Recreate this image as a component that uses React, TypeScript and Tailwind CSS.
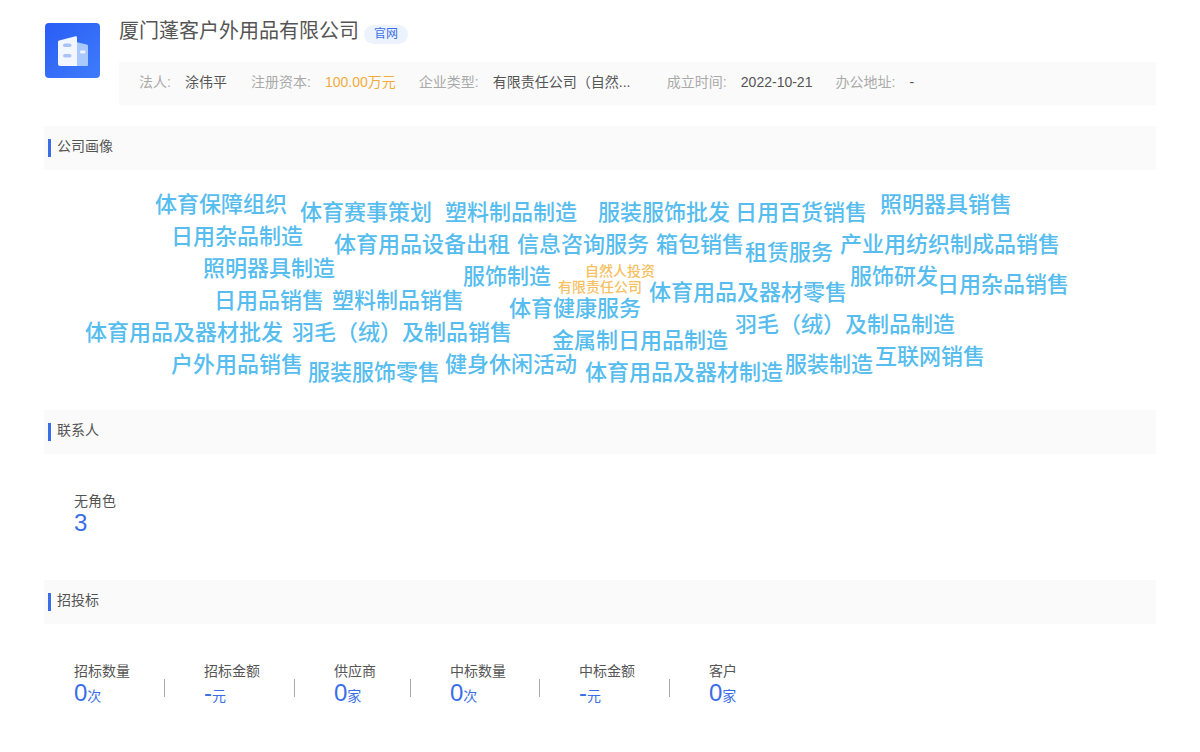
const F = '"Liberation Sans","Noto Sans CJK SC",sans-serif';

const words: [string, number, number, number?, string?][] = [
  ["体育保障组织", 155, 204],
  ["体育赛事策划", 300, 212],
  ["塑料制品制造", 445, 212],
  ["服装服饰批发", 598, 212],
  ["日用百货销售", 735, 212],
  ["照明器具销售", 880, 204],
  ["日用杂品制造", 171, 236],
  ["体育用品设备出租", 334, 244],
  ["信息咨询服务", 517, 244],
  ["箱包销售", 656, 244],
  ["租赁服务", 745, 252],
  ["产业用纺织制成品销售", 840, 244],
  ["照明器具制造", 203, 268],
  ["服饰制造", 463, 276],
  ["自然人投资", 585, 270, 14, "#f5c163"],
  ["有限责任公司", 558, 286, 14, "#f5c163"],
  ["体育用品及器材零售", 649, 292],
  ["服饰研发", 850, 276],
  ["日用杂品销售", 937, 284],
  ["日用品销售", 214, 300],
  ["塑料制品销售", 332, 300],
  ["体育健康服务", 509, 308],
  ["体育用品及器材批发", 85, 332],
  ["羽毛（绒）及制品销售", 292, 332],
  ["金属制日用品制造", 552, 340],
  ["羽毛（绒）及制品制造", 735, 324],
  ["户外用品销售", 171, 364],
  ["服装服饰零售", 308, 372],
  ["健身休闲活动", 445, 364],
  ["体育用品及器材制造", 585, 372],
  ["服装制造", 785, 364],
  ["互联网销售", 875, 356],
];

const info: [string, string, string?][] = [
  ["法人:", "涂伟平"],
  ["注册资本:", "100.00万元", "text-[#f2ac3a]"],
  ["企业类型:", "有限责任公司（自然..."],
  ["成立时间:", "2022-10-21"],
  ["办公地址:", "-"],
];

const bids: [string, string, string][] = [
  ["招标数量", "0", "次"],
  ["招标金额", "-", "元"],
  ["供应商", "0", "家"],
  ["中标数量", "0", "次"],
  ["中标金额", "-", "元"],
  ["客户", "0", "家"],
];

function Section({ title }: { title: string }) {
  return (
    <div className="h-11 bg-[#fafafa] flex items-start pl-1 pt-[12px]">
      <span className="w-[3px] h-[18px] bg-[#3a6ee8] mt-[1px]" />
      <span className="ml-1.5 text-sm leading-[16px] text-[#555]">{title}</span>
    </div>
  );
}

export default function App() {
  return (
    <div className="w-[1200px] h-[752px] bg-white overflow-hidden pl-11 pr-11 pt-[19px]" style={{ fontFamily: F }}>
      <div className="flex">
        <div className="mt-1 ml-px w-[55px] h-[55px] rounded-[4px] bg-gradient-to-br from-[#2a5cf5] to-[#3f7cfb] flex items-center justify-center shrink-0">
          <svg width="30" height="30" viewBox="0 0 30 30">
            <path d="M18 6l10.800 2.600c.7.2 1.200.8 1.200 1.500V29c0 .6-.4 1-1 1H18z" fill="#a9c8fb" />
            <path d="M0 6c0-.8.5-1.400 1.200-1.600L17.500.2c.8-.2 1.500.4 1.500 1.200V30H2c-1.100 0-2-.9-2-2z" fill="#f2f6fe" />
            <rect x="5" y="7.500" width="8.500" height="3.600" rx="1.800" fill="#a9c3f8" />
            <rect x="5" y="18" width="8.500" height="3.600" rx="1.800" fill="#a9c3f8" />
            <rect x="22" y="14.500" width="5.500" height="3" rx="1.400" fill="#eef4ff" />
          </svg>
        </div>
        <div className="ml-[19px] flex-1">
          <div className="flex items-center h-6">
            <span className="text-xl leading-6 text-[#555]">厦门蓬客户外用品有限公司</span>
            <span className="ml-[5px] mt-[6px] h-[19px] px-2.5 rounded-full bg-[#edf3fd] text-xs leading-[19px] text-[#3a6ee8]">官网</span>
          </div>
          <div className="mt-[19px] h-[43px] bg-[#fafafa] flex items-center pl-5 pb-[3px] text-sm">
            {info.map(([k, v, c], i) => (
              <div key={k} className={`flex ${i === 2 ? "w-[224px]" : ""} ${i === 2 || i === 4 ? "ml-[23px]" : i > 0 ? "ml-6" : ""}`}>
                <span className={`text-[#aaa] ${i === 0 ? "w-[33px]" : "w-[61px]"}`}>{k}</span>
                <span className={`ml-[13px] ${c ?? "text-[#555]"}`}>{v}</span>
              </div>
            ))}
          </div>
        </div>
      </div>

      <div className="mt-[21px]">
        <Section title="公司画像" />
      </div>
      <div className="relative h-[240px]">
        {words.map(([t, x, y, s, c]) => (
          <span
            key={t}
            className="absolute whitespace-nowrap font-medium"
            style={{
              left: x - 44,
              top: y - 169 - (s ?? 22) / 2 - 1,
              fontSize: s ?? 22,
              lineHeight: `${(s ?? 22) + 2}px`,
              color: c ?? "#56bdee",
            }}
          >
            {t}
          </span>
        ))}
      </div>

      <Section title="联系人" />
      <div className="h-[126px] pl-[30px] pt-[38px]">
        <div className="text-sm leading-[18px] text-[#555]">无角色</div>
        <div className="text-2xl leading-[26px] text-[#3a6ee8]">3</div>
      </div>

      <Section title="招投标" />
      <div className="flex pl-[30px] pt-[38px]">
        {bids.map(([k, v, u], i) => (
          <div key={i} className="flex">
            <div>
              <div className="text-sm leading-[18px] text-[#555]">{k}</div>
              <div className="flex items-baseline h-[26px] text-[#3a6ee8]">
                <span className="text-2xl leading-[26px]">{v}</span>
                <span className="text-sm leading-none">{u}</span>
              </div>
            </div>
            {i < bids.length - 1 && (
              <div className={`${i === 3 ? "ml-[33px]" : "ml-[34px]"} mr-[39px] mt-[17px] w-px h-[18px] bg-[#aaa]`} />
            )}
          </div>
        ))}
      </div>
    </div>
  );
}
